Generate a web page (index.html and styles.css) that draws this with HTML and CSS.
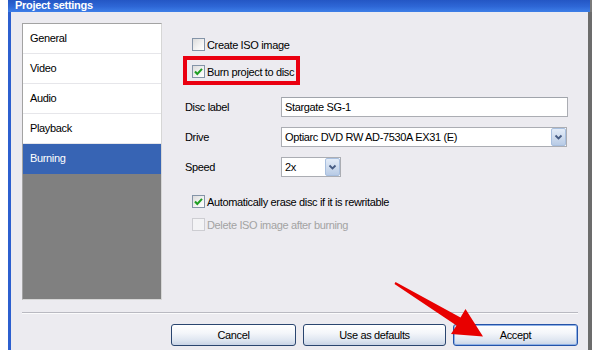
FILE: index.html
```html
<!DOCTYPE html>
<html lang="en">
  <head>
    <meta charset="UTF-8" />
    <meta name="viewport" content="width=device-width, initial-scale=1.0" />
    <title>Project settings</title>
    <link rel="stylesheet" href="styles.css">
  </head>
  <body>
    <div class="window">
      <!-- Title bar -->
      <div class="titlebar">
        <span class="title">Project settings</span>
      </div>

      <div class="frame">
        <div class="main">
          <!-- Left: section list -->
          <ul class="nav">
            <li class="nav-item">General</li>
            <li class="nav-item">Video</li>
            <li class="nav-item">Audio</li>
            <li class="nav-item">Playback</li>
            <li class="nav-item selected">Burning</li>
            <li class="nav-filler"></li>
          </ul>

          <!-- Right: burning options -->
          <div class="pane">
            <label class="check-row row-iso">
              <span class="box"></span>
              <span>Create ISO image</span>
            </label>
            <label class="check-row row-burn highlight">
              <span class="box checked">
                <svg viewBox="0 0 13 13" width="13" height="13"><path d="M3 6.5 L5.3 9 L10 3.8" /></svg>
              </span>
              <span>Burn project to disc</span>
            </label>

            <div class="field row-label">
              <span class="field-label">Disc label</span>
              <div class="textbox">Stargate SG-1</div>
            </div>
            <div class="field row-drive">
              <span class="field-label">Drive</span>
              <div class="combo combo-wide">
                <span class="combo-value">Optiarc DVD RW AD-7530A EX31 (E)</span>
                <span class="combo-btn">
                  <svg viewBox="0 0 15 18" width="15" height="18"><path d="M4.5 7.5 L7.5 10.5 L10.5 7.5" /></svg>
                </span>
              </div>
            </div>
            <div class="field row-speed">
              <span class="field-label">Speed</span>
              <div class="combo combo-short">
                <span class="combo-value">2x</span>
                <span class="combo-btn">
                  <svg viewBox="0 0 15 18" width="15" height="18"><path d="M4.5 7.5 L7.5 10.5 L10.5 7.5" /></svg>
                </span>
              </div>
            </div>

            <label class="check-row row-erase">
              <span class="box checked">
                <svg viewBox="0 0 13 13" width="13" height="13"><path d="M3 6.5 L5.3 9 L10 3.8" /></svg>
              </span>
              <span>Automatically erase disc if it is rewritable</span>
            </label>
            <label class="check-row row-delete disabled">
              <span class="box"></span>
              <span>Delete ISO image after burning</span>
            </label>
          </div>
        </div>

        <div class="separator"></div>

        <div class="buttons">
          <button class="btn btn-cancel">Cancel</button>
          <button class="btn btn-defaults">Use as defaults</button>
          <button class="btn btn-accept">Accept</button>
        </div>
      </div>
    </div>

    <!-- Red annotation arrow over the Accept button -->
    <svg class="arrow" viewBox="0 0 600 350" width="600" height="350">
      <polygon points="395.5,282 460.5,317.5 465.5,309 483,336.5 451,334 456.5,325.5 394.5,284" />
    </svg>
  </body>
</html>
```

FILE: styles.css
```css
* {
  margin: 0;
  padding: 0;
  box-sizing: border-box;
}

body {
  font-family: "Liberation Sans", Arial, sans-serif;
  font-size: 11px;
  letter-spacing: -0.35px;
  color: #000;
  background-color: #fff;
  width: 600px;
  height: 350px;
  overflow: hidden;
}

.window {
  margin-left: 8px;
  width: 584px;
  height: 350px;
  display: flex;
  flex-direction: column;
}

.titlebar {
  height: 12px;
  overflow: hidden;
  background: linear-gradient(to bottom, #2456c4 0%, #2e67d6 55%, #3e7fe8 100%);
  border-right: 2px solid #7a7a7a;
  padding-left: 7px;
}

.title {
  display: block;
  margin-top: -1px;
  line-height: 12px;
  color: #fff;
  font-weight: bold;
  letter-spacing: -0.3px;
}

.frame {
  flex: 1;
  background-color: #ecebf0;
  border-left: 3px solid #2c5fcf;
  border-right: 4px solid #6c6c6c;
  padding: 11px 10px 0 11px;
}

.main {
  display: flex;
}

/* Section list */
.nav {
  list-style: none;
  width: 140px;
  height: 277px;
  display: flex;
  flex-direction: column;
  border: 1px solid #a3a3a3;
  border-right-color: #d6d6d6;
  border-bottom-color: #d6d6d6;
  background-color: #fff;
}

.nav-item {
  height: 30px;
  line-height: 29px;
  padding-left: 7px;
  border-bottom: 1px solid #e6e6ea;
  background-color: #fff;
}

.nav-item.selected {
  background-color: #3764b4;
  border-bottom-color: #3764b4;
  color: #fff;
}

.nav-filler {
  flex: 1;
  background-color: #808080;
}

/* Options pane */
.pane {
  flex: 1;
  display: flex;
  flex-direction: column;
  padding-right: 10px;
}

.check-row {
  display: flex;
  align-items: center;
  gap: 2px;
  height: 13px;
  margin-left: 30px;
  align-self: flex-start;
}

.row-iso {
  margin-top: 15px;
}

.row-burn {
  margin-top: 14px;
}

.highlight {
  padding: 5px 2px 3px 5px;
  margin-left: 25px;
  margin-top: 9px;
  margin-bottom: -3px;
  height: 21px;
  outline: 4px solid #ea0010;
}

.box {
  width: 13px;
  height: 13px;
  border: 1px solid #8494a8;
  background: linear-gradient(135deg, #dcdcdc 0%, #f4f4f4 60%, #ffffff 100%);
  display: flex;
}

.box svg {
  margin: -1px;
}

.box path {
  fill: none;
  stroke: #1f9e22;
  stroke-width: 2;
}

.disabled {
  color: #a3a3a3;
}

.disabled .box {
  border-color: #cdcdd2;
  background: #f3f3f5;
}

.field {
  display: flex;
  align-items: center;
  margin-left: 23px;
  height: 20px;
}

.row-label {
  margin-top: 19px;
}

.row-drive,
.row-speed {
  margin-top: 10px;
}

.field-label {
  width: 96px;
}

.textbox {
  width: 287px;
  height: 20px;
  line-height: 18px;
  padding-left: 3px;
  background-color: #fff;
  border: 1px solid #abadb3;
  border-top-color: #a0a4ab;
}

.combo {
  height: 20px;
  display: flex;
  align-items: center;
  background-color: #fff;
  border: 1px solid #abadb3;
}

.combo-wide {
  width: 286px;
}

.combo-short {
  width: 60px;
}

.combo-value {
  flex: 1;
  padding-left: 3px;
  white-space: nowrap;
  overflow: hidden;
}

.combo-btn {
  width: 15px;
  height: 18px;
  display: flex;
  background: linear-gradient(to bottom, #e3ecf8 0%, #cfdcee 50%, #b8cbe6 100%);
  border: 1px solid #a8bfdf;
  border-radius: 2px;
}

.combo-btn svg {
  margin: -1px;
}

.combo-btn path {
  fill: none;
  stroke: #465b83;
  stroke-width: 1.8;
}

.row-erase {
  margin-top: 18px;
}

.row-delete {
  margin-top: 10px;
}

/* Bottom */
.separator {
  margin-top: 12px;
  height: 2px;
  border-top: 1px solid #b9b9c1;
  border-bottom: 1px solid #fbfbfc;
}

.buttons {
  display: flex;
  justify-content: flex-end;
  gap: 7px;
  margin-top: 10px;
}

.btn {
  height: 22px;
  font-family: inherit;
  font-size: 11px;
  letter-spacing: -0.35px;
  color: #000;
  border: 1px solid #2a456f;
  border-radius: 3px;
  background: linear-gradient(to bottom, #ffffff 0%, #f4f6fa 40%, #dfe6f1 75%, #c9d4e6 100%);
}

.btn-cancel,
.btn-accept {
  width: 125px;
}

.btn-defaults {
  width: 143px;
}

.btn-accept {
  border-color: #2453a8;
  box-shadow: inset 0 0 0 1px #8fb1e6;
}

.arrow {
  position: absolute;
  left: 0;
  top: 0;
  pointer-events: none;
}

.arrow polygon {
  fill: #e80000;
}
```
